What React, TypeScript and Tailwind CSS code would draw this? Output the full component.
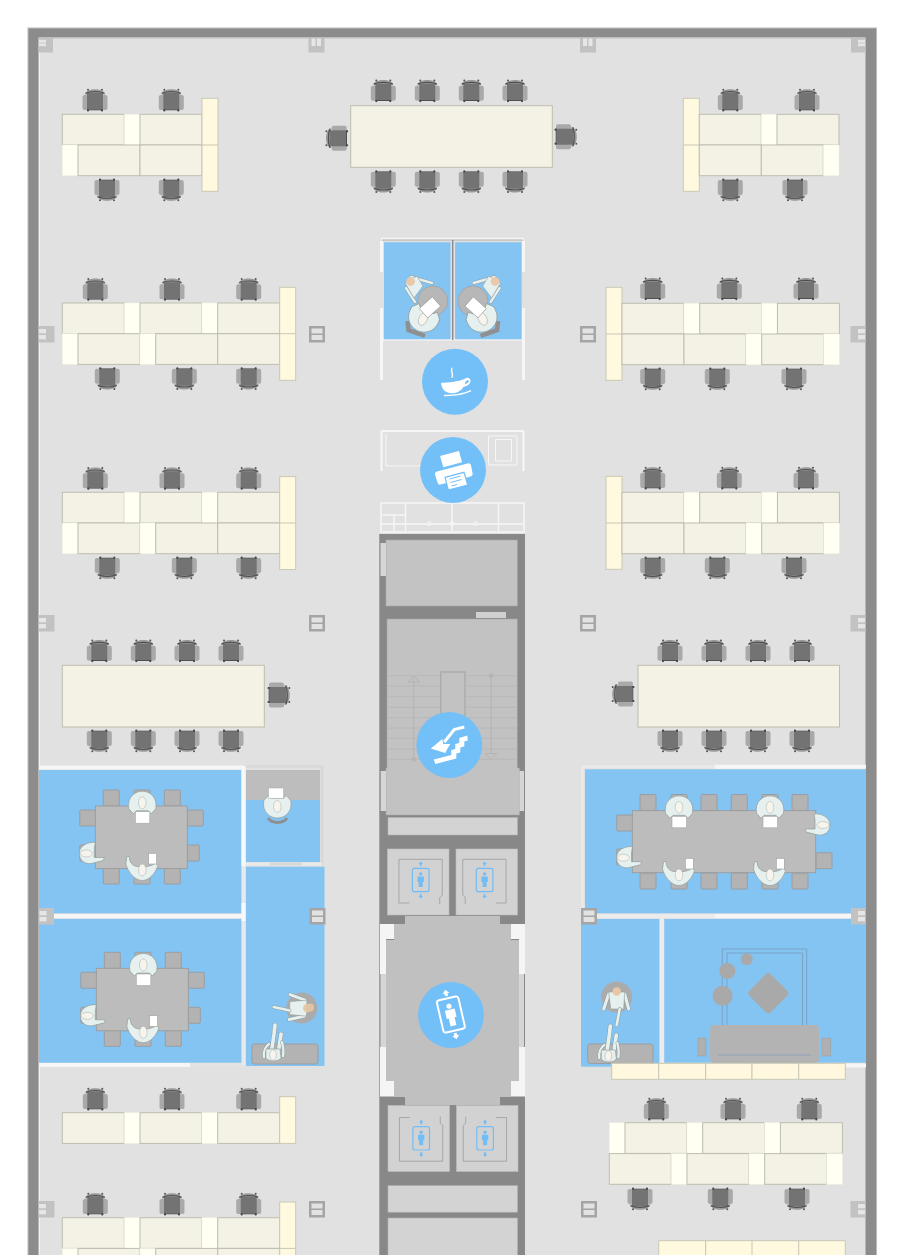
import React from 'react';

const DESK_W = 62;
const GAP_W = 15.7;

const Chair = ({ x, y, rot = 0 }: { x: number; y: number; rot?: number }) => (
  <g transform={`translate(${x} ${y}) rotate(${rot})`}>
    <rect x={-12.5} y={-5} width={5.5} height={15} rx={2} fill="#a9a9a9" />
    <rect x={7} y={-5} width={5.5} height={15} rx={2} fill="#a9a9a9" />
    <path d="M-10 -5.5 C-9 -12.5 9 -12.5 10 -5.5 Z" fill="#9a9a9a" />
    <rect x={-8} y={-7} width={16} height={16.5} fill="#737373" />
    <path d="M-9.5 -6.8 C-5 -8.8 5 -8.8 9.5 -6.8" fill="none" stroke="#4f4f4f" strokeWidth={1.2} />
    <path d="M-8 9.8 H8" stroke="#4f4f4f" strokeWidth={1} />
    <circle cx={-7} cy={-10.3} r={1} fill="#555" />
    <circle cx={7} cy={-10.3} r={1} fill="#555" />
    <circle cx={-7} cy={10.4} r={1.1} fill="#444" />
    <circle cx={7} cy={10.4} r={1.1} fill="#444" />
  </g>
);

// d = desk, l = empty light slot
const DeskRow = ({ x, y, cells, h = 30.7 }: { x: number; y: number; cells: string; h?: number }) => {
  let cx = x;
  return (
    <g>
      {cells.split('').map((c, i) => {
        const w = c === 'd' ? DESK_W : GAP_W;
        const el =
          c === 'd' ? (
            <rect key={i} x={cx} y={y} width={w} height={h} fill="#f4f2e5" stroke="#bebdaf" strokeWidth={1} />
          ) : (
            <rect key={i} x={cx} y={y} width={w} height={h} fill="#fffff3" stroke="#eeeee0" strokeWidth={0.5} />
          );
        cx += w;
        return el;
      })}
    </g>
  );
};

const Side = ({ x, y, split, h = 93 }: { x: number; y: number; split?: number; h?: number }) => (
  <g>
    <rect x={x} y={y} width={16} height={h} fill="#fff9e0" stroke="#c9c8b6" strokeWidth={1} />
    {split && <path d={`M${x} ${split} h16`} stroke="#c9c8b6" strokeWidth={1} />}
  </g>
);

// framed riser in the open floor
const Vent = ({ x, y }: { x: number; y: number }) => (
  <g>
    <rect x={x} y={y} width={16} height={16.5} fill="#a5a5a5" />
    <rect x={x + 2.5} y={y + 2.5} width={11} height={5} fill="#e2e2e2" />
    <rect x={x + 2.5} y={y + 9} width={11} height={5} fill="#e2e2e2" />
  </g>
);

// riser half built into the outer wall
const WallVent = ({ x, y, w = 16, h = 16.5, right = false }: { x: number; y: number; w?: number; h?: number; right?: boolean }) => {
  const small = h < 15;
  const ix = right ? x + w - 7.5 : x + 0.5;
  return (
    <g>
      <rect x={x} y={y} width={w} height={h} fill="#c2c2c2" />
      <rect x={ix} y={y + (small ? 1.8 : 3)} width={7} height={small ? 2.8 : 4.3} fill="#e6e6e6" />
      <rect x={ix} y={y + (small ? 5.4 : 9)} width={7} height={small ? 2.8 : 4.3} fill="#e6e6e6" />
    </g>
  );
};

const TopVent = ({ x }: { x: number }) => (
  <g>
    <rect x={x} y={38} width={16} height={14.5} fill="#c2c2c2" />
    <rect x={x + 3} y={38.5} width={4} height={7.5} fill="#e6e6e6" />
    <rect x={x + 8.5} y={38.5} width={4} height={7.5} fill="#e6e6e6" />
  </g>
);

const BODY = '#e6f1ef';
const LINE = '#8f9c9c';

const LaptopPerson = ({ x, y, rot = 0, tablet = true }: { x: number; y: number; rot?: number; tablet?: boolean }) => (
  <g transform={`translate(${x} ${y}) rotate(${rot})`}>
    <path d="M-9 11 L-13.5 6 C-15.5 -6 -7 -11.5 0 -11.5 C7 -11.5 15.5 -6 13.5 6 L9 11 L6 8 L-6 8 Z" fill={BODY} stroke={LINE} strokeWidth={0.7} />
    <ellipse cx={0} cy={0} rx={3.8} ry={6} fill="#f6f4ec" stroke="#a9aca8" strokeWidth={0.5} />
    {tablet && <rect x={-7} y={9} width={14.5} height={11.5} fill="#fff" stroke="#a5a5a5" strokeWidth={0.6} />}
  </g>
);

const NotePerson = ({ x, y }: { x: number; y: number }) => (
  <g transform={`translate(${x} ${y})`}>
    <path d="M-15.5 -13.5 L-13 -13.5 C-13 -7 -9 -4 -5 -3.5 L5 -3.5 C8 -4 11 -5 13 -7 L15.5 -4.5 C13.5 3 7 10.5 0 10.5 C-7 10.5 -14 3 -16.5 -6 Z" fill={BODY} stroke={LINE} strokeWidth={0.7} />
    <ellipse cx={0} cy={0} rx={3.8} ry={6} fill="#f6f4ec" stroke="#a9aca8" strokeWidth={0.5} />
    <rect x={6.3} y={-16.7} width={8} height={10.7} fill="#fff" stroke="#9d9d9d" strokeWidth={0.6} />
  </g>
);

const SidePerson = ({ x, y, flip = false }: { x: number; y: number; flip?: boolean }) => (
  <g transform={`translate(${x} ${y}) scale(${flip ? -1 : 1} 1)`}>
    <path d="M9 -11 C2 -12 -7 -8 -7 0 C-7 7 -1 11 5 10 L17 7 L18 4 L8 4 L8 -5 Z" fill={BODY} stroke={LINE} strokeWidth={0.7} />
    <ellipse cx={0} cy={0} rx={6} ry={3.5} fill="#f6f4ec" stroke="#a9aca8" strokeWidth={0.5} />
  </g>
);

const Limb = ({ d, w = 3 }: { d: string; w?: number }) => (
  <g fill="none" strokeLinecap="round" strokeLinejoin="round">
    <path d={d} stroke={LINE} strokeWidth={w + 1} />
    <path d={d} stroke={BODY} strokeWidth={w} />
  </g>
);

// sits in a round armchair, head to -y, arms and leg to +y
const LoungePerson = ({ x, y, rot = 0 }: { x: number; y: number; rot?: number }) => (
  <g transform={`translate(${x} ${y}) rotate(${rot})`}>
    <circle cx={0} cy={0} r={15.5} fill="#ababab" />
    <Limb d="M-8 -3 L-13 12" />
    <Limb d="M8 -3 L12 12" />
    <path d="M-8 -5 L8 -5 L7 12 L-6 12 Z" fill={BODY} stroke={LINE} strokeWidth={0.6} />
    <Limb d="M3 12 L0 28" w={2.6} />
    <circle cx={0} cy={-5.5} r={4.2} fill="#e9c7a6" />
  </g>
);

const BenchPerson = ({ x, y }: { x: number; y: number }) => (
  <g transform={`translate(${x} ${y})`}>
    <Limb d="M-1 -6 L1 -20 L2 -29" w={3.6} />
    <Limb d="M6 -6 L8 -20" w={3.6} />
    <Limb d="M-9 3 C-10 -3 -7 -8 -4 -10" w={2.4} />
    <Limb d="M10 2 C11 -3 10 -8 9 -12" w={2.4} />
    <path d="M-7 -5 L7 -5 L8 4 C5 8 -4 8 -7 4 Z" fill={BODY} stroke={LINE} strokeWidth={0.6} />
    <ellipse cx={0} cy={1} rx={3.4} ry={5.3} fill="#f6f4ec" stroke="#a9aca8" strokeWidth={0.5} />
  </g>
);

const Square = ({ x, y, w = 16, h = 16 }: { x: number; y: number; w?: number; h?: number }) => (
  <rect x={x} y={y} width={w} height={h} rx={1} fill="#b3b3b3" stroke="#979797" strokeWidth={0.8} />
);

const SmallTable = ({ x, y }: { x: number; y: number }) => (
  <g transform={`translate(${x} ${y})`}>
    {[8, 38.7, 69].map(dx => (
      <g key={dx}>
        <Square x={dx} y={-16} />
        <Square x={dx} y={62} />
      </g>
    ))}
    <Square x={-15.5} y={4} />
    <Square x={-15.5} y={39} />
    <Square x={92} y={4} />
    <Square x={92} y={39} w={12} />
    <rect x={0} y={0} width={92} height={62.5} fill="#bcbcbc" stroke="#989898" strokeWidth={0.8} />
    <LaptopPerson x={47} y={-3.3} />
    <NotePerson x={47} y={64} />
    <SidePerson x={-9} y={47.5} />
  </g>
);

const LiftGlyph = ({ x, y }: { x: number; y: number }) => (
  <g transform={`translate(${x} ${y})`}>
    <rect x={-8.3} y={-11.7} width={16.6} height={23.4} rx={2} fill="none" stroke="#73bdf6" strokeWidth={1.2} />
    <circle cx={0} cy={-6} r={1.7} fill="#73bdf6" />
    <path d="M-3.2 -3.6 H3.2 V2 H2 V7 H-2 V2 H-3.2 Z" fill="#73bdf6" />
    <path d="M0 -18.6 L2.3 -16 H0.9 V-14 H-0.9 V-16 H-2.3 Z" fill="#73bdf6" />
    <path d="M0 18.6 L2.3 16 H0.9 V14 H-0.9 V16 H-2.3 Z" fill="#73bdf6" />
  </g>
);

const LiftCab = ({ x, y, flip = false, down = false }: { x: number; y: number; flip?: boolean; down?: boolean }) => (
  <g>
    <rect x={x} y={y} width={61.5} height={66} fill="#d2d2d2" stroke="#bdbdbd" strokeWidth={0.6} />
    <g transform={`translate(${x + 30.75} ${y + 33}) scale(${flip ? -1 : 1} ${down ? -1 : 1})`}>
      <path d="M-9 21 H-19.3 V-22.7 H24 V13 L21.5 15.5 V22" fill="none" stroke="#a6a6a6" strokeWidth={1} />
    </g>
    <LiftGlyph x={x + (flip ? 28.6 : 33.2)} y={y + (down ? 32.8 : 31)} />
  </g>
);

const Desks = () => (
  <g>
    {/* top left */}
    <DeskRow x={62.3} y={114.3} cells="dld" />
    <DeskRow x={62.3} y={145} cells="ldd" />
    <Side x={202} y={98.3} split={145} />
    {/* top right */}
    <Side x={683.3} y={98.3} split={145} />
    <DeskRow x={699.3} y={114.3} cells="dld" />
    <DeskRow x={699.3} y={145} cells="ddl" />
    {/* left rows */}
    {[303, 492.3].map(y => (
      <g key={y}>
        <DeskRow x={62.3} y={y} cells="dldld" />
        <DeskRow x={62.3} y={y + 30.7} cells="ldldd" />
        <Side x={279.7} y={y - 15.7} split={y + 30.7} />
      </g>
    ))}
    {/* right rows */}
    {[303.3, 492.3].map(y => (
      <g key={y}>
        <Side x={606} y={y - 16} split={y + 30.7} />
        <DeskRow x={622} y={y} cells="dldld" />
        <DeskRow x={622} y={y + 30.7} cells="ddldl" />
      </g>
    ))}
    {/* big tables */}
    <rect x={350.7} y={105.7} width={201.6} height={61.6} fill="#f4f2e5" stroke="#bebdaf" />
    <rect x={62.3} y={665.3} width={202} height={61.7} fill="#f4f2e5" stroke="#bebdaf" />
    <rect x={638} y={665.3} width={201.5} height={61.7} fill="#f4f2e5" stroke="#bebdaf" />
    {/* bottom left */}
    <DeskRow x={62.3} y={1112.7} cells="dldld" />
    <Side x={279.7} y={1096.7} h={46.7} />
    <DeskRow x={62.3} y={1217.7} cells="dldld" />
    <DeskRow x={62.3} y={1248.4} cells="ldldd" />
    <Side x={279.7} y={1202} split={1248.4} h={60} />
    {/* bottom right */}
    <DeskRow x={609.3} y={1122.7} cells="ldldld" />
    <DeskRow x={609.3} y={1153.6} cells="dldldl" />
    {[658.7, 705.7, 752, 798.7].map(x => (
      <rect key={x} x={x} y={1240.7} width={x === 798.7 ? 46.6 : 47} height={30} fill="#fff9e0" stroke="#c9c8b6" />
    ))}
  </g>
);

const topChairs: [number, number][] = [
  [95, 100], [171.3, 100], [730.3, 100], [807, 100],
  [383.3, 90.7], [427.3, 90.7], [471.3, 90.7], [515, 90.7],
  [95.3, 289.3], [172, 289.3], [248.7, 289.3], [95.3, 478.3], [172, 478.3], [248.7, 478.3],
  [652.7, 288.7], [729.3, 288.7], [806, 288.7], [652.7, 478], [729.3, 478], [806, 478],
  [99.3, 650.7], [143.3, 650.7], [187, 650.7], [231, 650.7],
  [670, 650.7], [714, 650.7], [758, 650.7], [802, 650.7],
  [95.3, 1099], [172, 1099], [248.7, 1099], [95.3, 1204], [172, 1204], [248.7, 1204],
  [656.3, 1109], [733, 1109], [809.3, 1109],
];

const bottomChairs: [number, number][] = [
  [107, 190], [171.3, 190], [730.3, 190], [795, 190],
  [383.3, 181.7], [427.3, 181.7], [471.3, 181.7], [515, 181.7],
  [107.3, 378.7], [184.3, 378.7], [248.7, 378.7], [107.3, 568], [184.3, 568], [248.7, 568],
  [652.7, 379], [717.3, 379], [794, 379], [652.7, 568], [717.3, 568], [794, 568],
  [99.3, 741], [143.3, 741], [187, 741], [231, 741],
  [670, 741], [714, 741], [758, 741], [802, 741],
  [640, 1199], [720.3, 1199], [797, 1199],
];

const CoffeeIcon = () => (
  <g transform="translate(455 381.7)" fill="#fff">
    <path d="M-3 -14 C-5 -10 -1 -9 -3 -4" fill="none" stroke="#fff" strokeWidth={1.4} />
    <path d="M-14 1 C-7 1 3 0 10 -3 C12 -5 16 -4 15.5 -0.5 C15 3 11.5 4.5 8.5 5 C6.5 9 2 11.5 -3 11.5 C-9 11.5 -13.5 8 -14 1 Z" />
    <path d="M10.5 0 C12 -2 14 -2 13.7 -0.2 C13.3 1.3 11.5 2.2 9.8 2.5 Z" fill="#73bff8" />
    <path d="M-11 13.8 C-3 14 8 13 16 9" fill="none" stroke="#fff" strokeWidth={1.4} />
  </g>
);

const PrinterIcon = () => (
  <g transform="translate(453 470)" fill="#fff">
    <path d="M-13 -14 L6 -19 L9 -7.7 L-9.7 -2.7 Z" />
    <path d="M-16 1.5 L14.5 -6.5 C16.5 -7 17.5 -6 18 -4.5 L19.5 3 C20 5 19 6 17.5 6.5 L-12.5 14.5 C-14 15 -15 14 -15.5 12.5 L-18 4.5 C-18.5 3 -17.5 2 -16 1.5 Z" />
    <path d="M-8 7.3 L11 2.3 L14.7 15 L-4.7 20 Z" stroke="#73bff8" strokeWidth={1.2} />
    <path d="M-3.5 9 L7.5 6 M-2.5 12.5 L8.5 9.5 M-1.5 16 L4 14.5" stroke="#73bff8" strokeWidth={1} />
  </g>
);

const StairIcon = () => (
  <g transform="translate(449.3 745)" fill="#fff">
    <path d="M-15.5 14.5 L2 10 L2 5 L6 4 L6 -1 L10 -2 L10 -7 L18 -9.5 L18.5 -4.5 L15 -3.5 L15 1.5 L11 2.5 L11 7.5 L7 8.5 L7 13.5 L-14 19 Z" />
    <path d="M15 -18 L5 -15.5 L-5 -3" fill="none" stroke="#fff" strokeWidth={3} />
    <path d="M-18.5 3.5 L-7 -6 L-6 -1 L1 -1 L-2 4 L-4 8 Z" />
  </g>
);

const ElevatorIcon = () => (
  <g transform="translate(451 1015) rotate(-13)" fill="#fff">
    <rect x={-11} y={-17} width={22} height={33} rx={2.5} fill="none" stroke="#fff" strokeWidth={2} />
    <circle cx={0} cy={-9} r={2.6} />
    <path d="M-5 -5.5 H5 V3 H3 V11 H-3 V3 H-5 Z" />
    <path d="M0 -26 L3.5 -22 H1.5 V-19.5 H-1.5 V-22 H-3.5 Z" />
    <path d="M0 25 L3.5 21 H1.5 V18.5 H-1.5 V21 H-3.5 Z" />
  </g>
);

const Core = () => (
  <g>
    <rect x={379.3} y={534} width={145.7} height={730} fill="#888888" />
    {/* top plant room */}
    <rect x={386} y={540} width={131.3} height={66} fill="#c3c3c3" stroke="#a9a9a9" strokeWidth={0.6} />
    <rect x={380.5} y={543} width={5.5} height={33} fill="#d6d6d6" />
    <rect x={476} y={612} width={30} height={6} fill="#d0d0d0" />
    {/* stair room */}
    <path d="M387 619 H517.3 V768 H519.5 V815 H386 V768 H387 Z" fill="#c2c2c2" stroke="#a9a9a9" strokeWidth={0.6} />
    <rect x={380.7} y={771} width={5.3} height={40} fill="#d6d6d6" />
    <rect x={519.5} y={771} width={4.5} height={40} fill="#d6d6d6" />
    <rect x={388} y={817.5} width={129.5} height={17.5} fill="#d3d3d3" stroke="#b3b3b3" strokeWidth={0.6} />
    {[675.7, 686, 696.7, 707.3, 717.7, 728, 738.3, 749, 759.3].map(y => (
      <path key={y} d={`M388 ${y} H517`} stroke="#b5b5b5" strokeWidth={0.8} />
    ))}
    <rect x={440.7} y={672} width={24.3} height={48} fill="#c2c2c2" stroke="#acacac" strokeWidth={1.4} />
    <path d="M413.7 678 V759" stroke="#b0b0b0" strokeWidth={0.8} />
    <path d="M408 682 L413.7 676 L419.5 682 Z" fill="none" stroke="#b0b0b0" strokeWidth={0.8} />
    <circle cx={413.7} cy={759.5} r={1.8} fill="none" stroke="#b0b0b0" />
    <path d="M491 676 V754" stroke="#b0b0b0" strokeWidth={0.8} />
    <circle cx={491} cy={675.7} r={1.8} fill="none" stroke="#b0b0b0" />
    <path d="M485.3 753.5 L491 759.5 L496.8 753.5 Z" fill="none" stroke="#b0b0b0" strokeWidth={0.8} />
    {/* lifts */}
    <LiftCab x={387.5} y={849} />
    <LiftCab x={456} y={849} flip />
    <LiftCab x={388} y={1105.5} down />
    <LiftCab x={456.5} y={1105.5} flip down />
    {/* lobby */}
    <rect x={380.5} y={974} width={5.5} height={73} fill="#d6d6d6" />
    <rect x={519} y={974} width={5} height={73} fill="#d6d6d6" />
    <path d="M380 924 H394 V939 H386 V974 H380 Z" fill="#f5f5f5" />
    <path d="M380 1096.5 H394 V1081 H386 V1047 H380 Z" fill="#f5f5f5" />
    <path d="M525 924 H511 V939 H519 V974 H525 Z" fill="#f5f5f5" />
    <path d="M525 1096.5 H511 V1081 H519 V1047 H525 Z" fill="#f5f5f5" />
    <path d="M405 916 H500 V924 H511 V940 H519 V1081 H511 V1097 H500 V1105 H405 V1097 H394 V1081 H386 V940 H394 V924 H405 Z" fill="#c0c0c0" />
    {/* lower rooms */}
    <rect x={388} y={1185.7} width={129.5} height={26.5} fill="#d3d3d3" stroke="#b3b3b3" strokeWidth={0.6} />
    <rect x={388} y={1218} width={129.5} height={50} fill="#d3d3d3" stroke="#b3b3b3" strokeWidth={0.6} />
  </g>
);

const Cabin = () => (
  <g>
    <rect x={384} y={242.3} width={66.5} height={97} fill="#84c4f3" />
    <path d="M407.5 321 L408.5 330 L425 336" fill="none" stroke="#8f8f8f" strokeWidth={4.5} />
    <circle cx={432.7} cy={301} r={15} fill="#b7b7b7" stroke="#9a9a9a" strokeWidth={0.6} />
    <Limb d="M411 277 L432 283" w={2.4} />
    <Limb d="M406 288 L415 302" w={2.4} />
    <path d="M405 283 L417 276 L423 286 L414 298 Z" fill={BODY} stroke={LINE} strokeWidth={0.6} />
    <circle cx={410.5} cy={281.5} r={4.4} fill="#e8c9ab" />
    <g transform="translate(423 319) scale(1.12) translate(-423 -319)">
      <LaptopPerson x={423} y={319} rot={-155} tablet={false} />
    </g>
    <rect x={421} y={301} width={17.5} height={12.5} transform="rotate(-42 430 307)" fill="#fff" stroke="#8f8f8f" strokeWidth={0.6} />
  </g>
);

const ThinWalls = () => (
  <g fill="none" stroke="#f6f6f6">
    {/* cabins frame */}
    <path d="M381 239 H524" strokeWidth={2.4} />
    <path d="M382 240 H523" stroke="#8f8f8f" strokeWidth={0.7} />
    <path d="M381.5 241 V272 M381.5 308 V380 M523.5 241 V272 M523.5 308 V380" strokeWidth={3} />
    <path d="M381 339.5 H524" strokeWidth={2} />
    {/* print room frame */}
    <path d="M381 431 H524 M381.5 431 V471 M523.5 431 V471" strokeWidth={2.2} />
    <path d="M386 434 V466 H445 M488.5 436 H517 V465 H488.5 Z M495.5 439.5 H511.5 V461 H495.5 Z" strokeWidth={1} />
    <path d="M381 503 H524 V532 H381 Z M381 524 H524 M405.5 503 V531 M452 503 V531 M498.5 503 V531 M383 515 H405 M394 515 V532" strokeWidth={1.5} />
    <circle cx={429} cy={523.5} r={2} strokeWidth={1} />
    <circle cx={452} cy={523.5} r={2} strokeWidth={1} />
    <circle cx={475.5} cy={523.5} r={2} strokeWidth={1} />
  </g>
);

const LeftRooms = () => (
  <g>
    <rect x={39} y={770} width={202.3} height={143.3} fill="#84c4f3" />
    <rect x={39} y={919} width={202.3} height={143.7} fill="#84c4f3" />
    <rect x={246} y={770} width={74} height={92} fill="#84c4f3" />
    <rect x={246} y={770} width={74} height={30} fill="#bdbdbd" />
    <rect x={246} y={866.7} width={78.5} height={199.3} fill="#84c4f3" />
    {/* white walls */}
    <path d="M39 767.5 H243 M54 916 H243 M39 1065 H190" stroke="#f6f6f6" strokeWidth={4} />
    <path d="M190 1065 H246" stroke="#e4e4e4" strokeWidth={3} />
    <path d="M243.5 766 V866" stroke="#f8f8f8" strokeWidth={4} />
    <path d="M243.5 866 V1065" stroke="#e9e9e9" strokeWidth={3} />
    <path d="M243.5 903 V921" stroke="#f8f8f8" strokeWidth={4} />
    <path d="M246 766.5 H322 V864 H246" fill="none" stroke="#d8d8d8" strokeWidth={2.5} />
    <path d="M246 864 H270 M302 864 H322" stroke="#e9e9e9" strokeWidth={3} />
    <SmallTable x={95.3} y={806} />
    <SmallTable x={96.3} y={968.3} />
    {/* phone booth */}
    <path d="M268 818 C272 824 283 824 287 818" fill="none" stroke="#8f8f8f" strokeWidth={3} />
    <LaptopPerson x={277.3} y={806.5} rot={180} tablet={false} />
    <rect x={268.5} y={788} width={15} height={10.5} fill="#fff" stroke="#a5a5a5" strokeWidth={0.5} />
    {/* lounge corner */}
    <LoungePerson x={301.7} y={1008} rot={92} />
    <circle cx={310} cy={1007.5} r={4} fill="#e0c4a6" />
    <rect x={252} y={1044} width={66} height={20} rx={2.5} fill="#b3b3b3" stroke="#979797" strokeWidth={0.8} />
    <BenchPerson x={273} y={1054} />
  </g>
);

const RightRooms = () => (
  <g>
    <rect x={585} y={769.3} width={280} height={144} fill="#84c4f3" />
    <rect x={581} y={919} width={78.3} height={147.7} fill="#84c4f3" />
    <rect x={664.3} y={919} width={201} height={143.7} fill="#84c4f3" />
    <path d="M715 766.8 H866 M715 916 H852 M664 1065.5 H866" stroke="#f6f6f6" strokeWidth={4} />
    <path d="M582.5 766.8 H715 M582.5 766 V909" fill="none" stroke="#e9e9e9" strokeWidth={3} />
    <path d="M596 916 H715" stroke="#ececec" strokeWidth={3.5} />
    <path d="M662 918 V1063" stroke="#ececec" strokeWidth={4} />
    {/* long table */}
    {[640, 671, 701, 731.3, 762, 792].map(x => (
      <g key={x}>
        <Square x={x} y={794.5} />
        <Square x={x} y={873} />
      </g>
    ))}
    <Square x={616.7} y={815} />
    <Square x={616.7} y={849} />
    <Square x={816} y={852.7} />
    <rect x={632.3} y={810.7} width={183.4} height={62} fill="#bcbcbc" stroke="#989898" strokeWidth={0.8} />
    <LaptopPerson x={679} y={807.3} />
    <LaptopPerson x={770} y={807.3} />
    <NotePerson x={679} y={875} />
    <NotePerson x={770} y={875} />
    <SidePerson x={623.5} y={857.7} />
    <SidePerson x={823} y={825} flip />
    {/* lounge */}
    <path d="M722.3 1025 V949 H806.7 V1025 M727 1025 V953 H802.5 V1025" fill="none" stroke="#7ba3c6" strokeWidth={1} />
    <circle cx={746.7} cy={959.3} r={6} fill="#a9a9a9" />
    <circle cx={727.3} cy={971} r={8} fill="#a9a9a9" />
    <circle cx={722.5} cy={995.7} r={10} fill="#a9a9a9" />
    <rect x={753} y={978} width={30.5} height={30.5} rx={4} transform="rotate(45 768.3 993.3)" fill="#a9a9a9" />
    <rect x={698} y={1038} width={8} height={18} fill="#b0b0b0" stroke="#979797" strokeWidth={0.5} />
    <rect x={822} y={1038} width={8.5} height={18} fill="#b0b0b0" stroke="#979797" strokeWidth={0.5} />
    <rect x={710} y={1025} width={109} height={38} rx={4} fill="#b3b3b3" />
    <path d="M718 1055 H811" stroke="#8da4b8" strokeWidth={1} />
    {/* meeting nook */}
    <LoungePerson x={616.7} y={997} />
    <rect x={587.7} y={1044} width={65.3} height={19.5} rx={2.5} fill="#b3b3b3" stroke="#979797" strokeWidth={0.8} />
    <BenchPerson x={608.3} y={1055} />
    {/* credenza */}
    {[611.7, 658.7, 705.7, 752, 798.7].map(x => (
      <rect key={x} x={x} y={1063.3} width={x === 798.7 ? 46.6 : x === 752 ? 46.7 : x === 705.7 ? 46.3 : 47} height={16} fill="#fff8df" stroke="#c9c8b6" />
    ))}
  </g>
);

const FloorPlan = () => (
  <svg width={900} height={1255} viewBox="0 0 900 1255" className="block blur-[0.4px]">
    <rect x={28} y={28} width={848.5} height={1240} fill="#8c8c8c" stroke="#b9b9b9" strokeWidth={1} />
    <rect x={38.5} y={37.5} width={827} height={1230} fill="#e1e1e1" />
    <path d="M39 38 H865" stroke="#c2c2c2" strokeWidth={1} />
    <path d="M39.5 38 V1260" stroke="#f2f2f2" strokeWidth={1} />

    <WallVent x={38.5} y={38} w={14.5} h={14.5} />
    <TopVent x={308.5} />
    <TopVent x={580} />
    <WallVent x={851} y={38} w={14.5} h={14.5} right />
    {[326, 615].map(y => (
      <g key={y}>
        <WallVent x={38.5} y={y} />
        <Vent x={309} y={y} />
        <Vent x={580} y={y} />
        <WallVent x={850.5} y={y} w={15} right />
      </g>
    ))}
    <WallVent x={38.5} y={1201} />
    <Vent x={309} y={1201} />
    <Vent x={581} y={1201} />
    <WallVent x={850.5} y={1201} w={15} right />

    <Desks />
    {topChairs.map(([x, y]) => <Chair key={`t${x}-${y}`} x={x} y={y} />)}
    {bottomChairs.map(([x, y]) => <Chair key={`b${x}-${y}`} x={x} y={y} rot={180} />)}
    <Chair x={336.7} y={138.3} rot={-90} />
    <Chair x={566} y={136.7} rot={90} />
    <Chair x={279} y={695} rot={90} />
    <Chair x={623} y={694} rot={-90} />

    <ThinWalls />
    <Cabin />
    <g transform="translate(905.6 0) scale(-1 1)">
      <Cabin />
    </g>
    <path d="M452.7 240 V340" stroke="#8a8a8a" strokeWidth={1.4} />

    <Core />
    <LeftRooms />
    <RightRooms />

    <WallVent x={39} y={908} w={15} />
    <Vent x={309.5} y={908} />
    <Vent x={581} y={908} />
    <WallVent x={851} y={908} w={14.5} right />

    <circle cx={455} cy={381.7} r={33} fill="#73bff8" />
    <CoffeeIcon />
    <circle cx={453} cy={470} r={33} fill="#73bff8" />
    <PrinterIcon />
    <circle cx={449.3} cy={745} r={33} fill="#73bff8" />
    <StairIcon />
    <circle cx={451} cy={1015} r={33} fill="#73bff8" />
    <ElevatorIcon />
  </svg>
);

export default function App() {
  return (
    <div className="h-[1255px] w-[900px] overflow-hidden bg-white">
      <FloorPlan />
    </div>
  );
}
